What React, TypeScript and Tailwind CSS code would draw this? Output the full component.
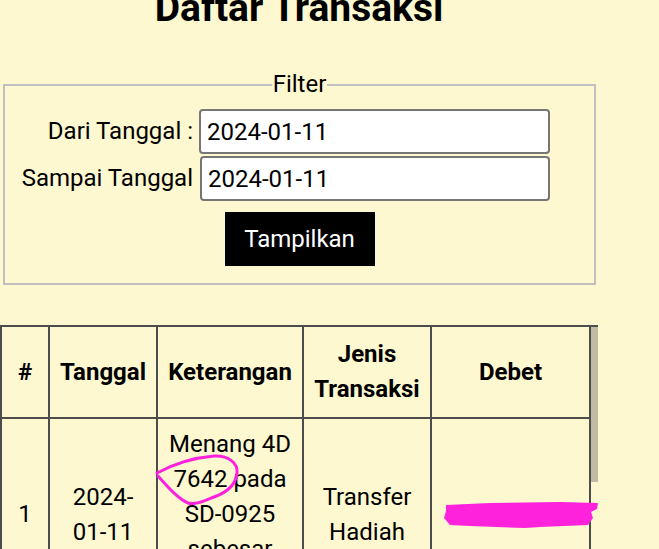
import React from "react";

const cell = "border-2 border-[#4d4d4d] text-center align-middle";

export default function App() {
  return (
    <div className="relative w-[659px] h-[549px] overflow-hidden bg-[#fdf8d0] text-black font-['Roboto',sans-serif] text-[24px] leading-[35px]">
      <h1 className="-mt-[11px] w-[598px] text-center text-[39px] leading-[39px] font-bold">Daftar Transaksi</h1>

      <fieldset className="mt-[39px] ml-[3px] w-[593px] border-2 border-[#c0c0c0] pt-[7px] pb-[17px]">
        <legend className="mx-auto px-[1px]">Filter</legend>
        <div className="grid grid-cols-[188px_351px] gap-x-[6px] gap-y-[2px] items-center">
          <label className="text-right whitespace-nowrap">Dari Tanggal :</label>
          <input
            defaultValue="2024-01-11"
            className="h-[45px] rounded-[4px] border-2 border-[#767676] bg-white px-[6px] text-[24px] outline-none"
          />
          <label className="text-right whitespace-nowrap">Sampai Tanggal</label>
          <input
            defaultValue="2024-01-11"
            className="ml-[1px] h-[45px] rounded-[4px] border-2 border-[#767676] bg-white px-[6px] text-[24px] outline-none"
          />
        </div>
        <div className="mt-[11px] flex justify-center">
          <button className="h-[54px] w-[150px] bg-black text-white">Tampilkan</button>
        </div>
      </fieldset>

      <div className="mt-[40px] w-[598px] overflow-hidden">
        <table className="table-fixed border-collapse w-[750px]">
          <colgroup>
            <col className="w-[48px]" />
            <col className="w-[108px]" />
            <col className="w-[146px]" />
            <col className="w-[128px]" />
            <col className="w-[159px]" />
            <col className="w-[161px]" />
          </colgroup>
          <thead>
            <tr className="font-bold">
              <th className={`${cell} py-[10px] px-[6px]`}>#</th>
              <th className={`${cell} py-[10px] px-[6px]`}>Tanggal</th>
              <th className={`${cell} py-[10px] px-[6px]`}>Keterangan</th>
              <th className={`${cell} py-[10px] px-[6px]`}>Jenis Transaksi</th>
              <th className={`${cell} py-[10px] px-[6px]`}>Debet</th>
              <th className={`${cell} py-[10px] px-[6px]`}>Kredit</th>
            </tr>
          </thead>
          <tbody>
            <tr>
              <td className={`${cell} py-[8px] px-[6px]`}>1</td>
              <td className={`${cell} py-[8px] px-[12px]`}>
                2024-<wbr />01-11
              </td>
              <td className={`${cell} py-[8px] px-[10px]`}>Menang 4D 7642 pada SD-0925 sebesar 2.800.000</td>
              <td className={`${cell} py-[8px] px-[10px]`}>Transfer Hadiah</td>
              <td className={`${cell} py-[8px] px-[10px]`}></td>
              <td className={`${cell} py-[8px] px-[10px]`}></td>
            </tr>
          </tbody>
        </table>
      </div>

      {/* scrollbar thumb */}
      <div className="absolute left-[591px] top-[327px] w-[7px] h-[155px] bg-[#bfbba5]" />

      {/* pen marks */}
      <svg className="absolute left-0 top-0 pointer-events-none" width="659" height="549">
        <path
          d="M157 473 C170 466 190 458 214 456 C228 455 238 463 237 473 C236 484 228 492 214 497 C204 501 196 505 188 503 C178 499 168 487 158 476"
          fill="none"
          stroke="#ff22dd"
          strokeWidth="3"
          strokeLinecap="round"
        />
        <path
          d="M446 505 L490 503 L560 502 L598 503 L597 509 L591 512 L593 518 L588 525 L540 527 L525 528 L470 526 L450 525 L444 518 L446 511 Z"
          fill="#ff22dd"
        />
      </svg>
    </div>
  );
}
